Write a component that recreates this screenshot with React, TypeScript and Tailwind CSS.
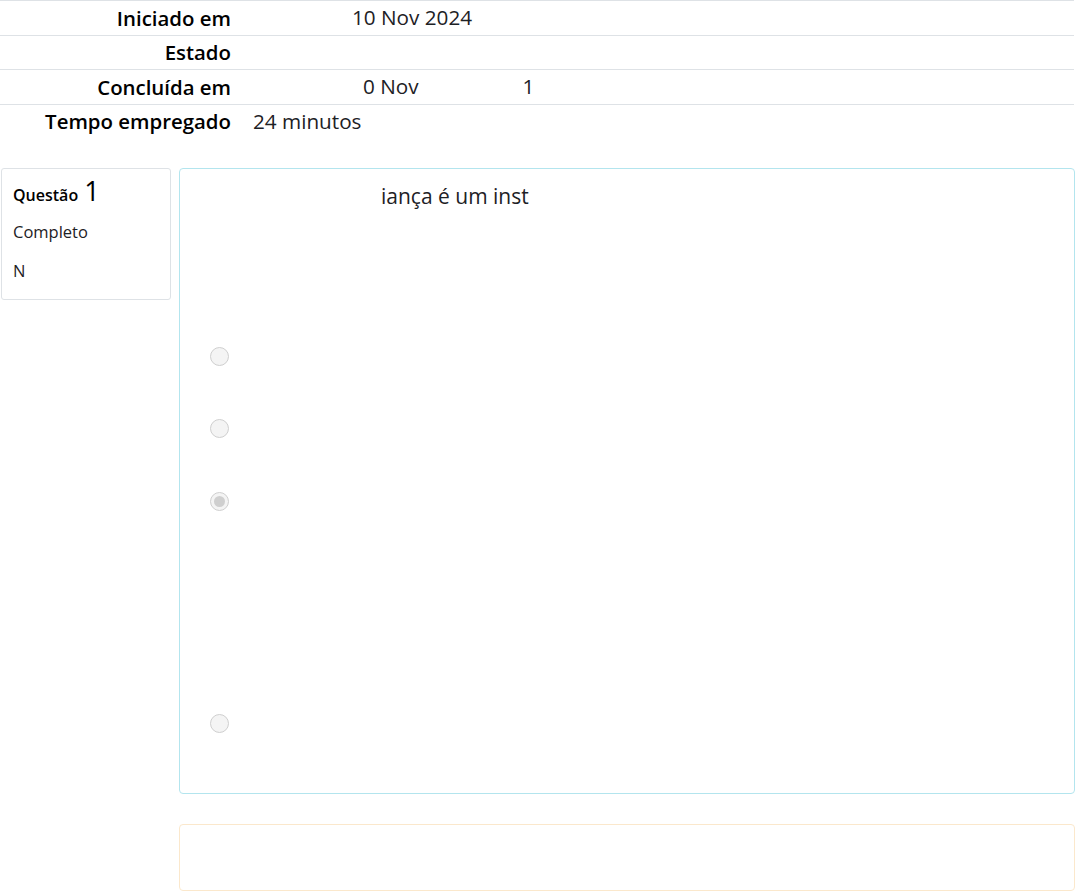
import React from "react";

const font = { fontFamily: '"Open Sans", "Noto Sans", sans-serif' };

function Row({ label, children }: { label: string; children?: React.ReactNode }) {
  return (
    <div className="flex h-[34.5px] items-center border-t border-[#dee2e6]">
      <div className="w-[231px] shrink-0 text-right text-[20.4px] font-semibold text-black">{label}</div>
      <div className="pl-[22px] text-[#1d2125]">{children}</div>
    </div>
  );
}

function Radio({ checked }: { checked?: boolean }) {
  return (
    <div className="flex h-[19px] w-[19px] items-center justify-center rounded-full border border-[#cfcfcf] bg-[#f4f4f4]">
      {checked && <div className="h-[11px] w-[11px] rounded-full bg-[#cfcfcf]" />}
    </div>
  );
}

export default function App() {
  return (
    <div className="min-h-[891px] w-[1075px] overflow-hidden bg-white text-[20.7px] leading-none" style={font}>
      <div className="w-[1074px]">
        <Row label="Iniciado em">
          <span className="ml-[99px]">10 Nov 2024</span>
        </Row>
        <Row label="Estado" />
        <Row label="Concluída em">
          <span className="ml-[110px]">0 Nov</span>
          <span className="ml-[104px]">1</span>
        </Row>
        <Row label="Tempo empregado">24 minutos</Row>
      </div>
      <div className="mt-[30px] flex items-start gap-[8px] pl-[1px]">
        <div className="h-[132px] w-[170px] shrink-0 rounded-[3px] border border-[#dee2e6] px-[11px] pt-[8px] text-[#1d2125]">
          <div className="flex items-baseline">
            <span className="text-[16px] font-semibold text-black">Questão</span>
            <span className="ml-[6px] text-[27px] text-black">1</span>
          </div>
          <div className="mt-[20px] text-[16.5px]">Completo</div>
          <div className="mt-[22px] text-[16.5px]">N</div>
        </div>
        <div className="flex w-[896px] flex-col gap-[30px]">
          <div className="relative h-[626px] rounded-[4px] border border-[#b3e5ee]">
            <div className="pl-[201px] pt-[17px] text-[21px] text-[#1d2125]">iança é um inst</div>
            <div className="absolute left-[30px] top-[178px]"><Radio /></div>
            <div className="absolute left-[30px] top-[250px]"><Radio /></div>
            <div className="absolute left-[30px] top-[323px]"><Radio checked /></div>
            <div className="absolute left-[30px] top-[545px]"><Radio /></div>
          </div>
          <div className="h-[67px] rounded-[4px] border border-[#fbe8cc]" />
        </div>
      </div>
    </div>
  );
}
